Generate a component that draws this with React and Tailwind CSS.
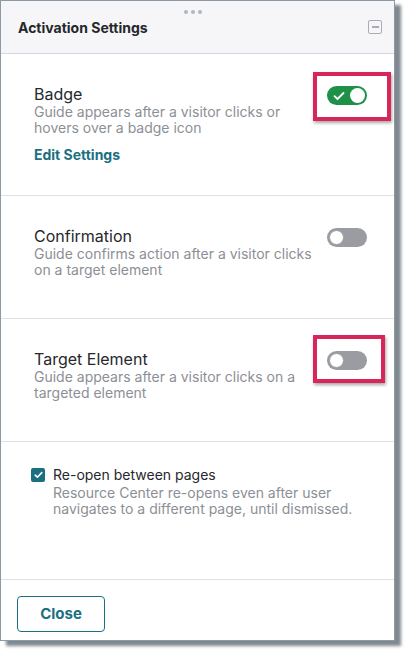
import React, { useState } from 'react';

const Toggle = ({ on }) => (
  <div
    className={`w-[40px] h-[19px] rounded-full flex items-center px-[2px] ${
      on ? 'bg-[#1e9149] justify-end' : 'bg-[#9b9ca1] justify-start'
    }`}
  >
    {on && (
      <svg width="12" height="10" viewBox="0 0 12 10" className="mr-[5px]">
        <path d="M1.5 5.2 L4.5 8 L10.5 2" fill="none" stroke="white" strokeWidth="1.8" strokeLinecap="round" strokeLinejoin="round" />
      </svg>
    )}
    <div className={`w-[15px] h-[15px] rounded-full bg-white ${on ? '' : 'border border-[#9b9ca1]'}`} />
  </div>
);

const Highlight = ({ children, box }) => (
  <div className="relative">
    {children}
    <div className={`absolute border-4 border-[#d8265a] shadow-[1px_2px_3px_rgba(0,0,0,0.35)] ${box}`} />
  </div>
);

const Section = ({ title, desc, toggle, extra, pb }) => (
  <div className={`flex justify-between pl-[33px] pr-[27px] pt-[30px] border-b border-[#dfe0e4] ${pb}`}>
    <div>
      <div className="text-[16px] leading-[20px] text-[#26282c]">{title}</div>
      <div className="text-[14px] leading-[16px] text-[#8c8f96] w-[285px]">{desc}</div>
      {extra}
    </div>
    <div className="pt-[2px]">{toggle}</div>
  </div>
);

const App = () => {
  const [reopen] = useState(true);

  return (
    <div className="w-[405px] h-[652px] bg-white" style={{ fontFamily: 'Inter, "Noto Sans", sans-serif' }}>
      <div className="w-[395px] h-[641px] flex flex-col bg-white border border-[#8e9aa3] shadow-[6px_5px_3px_#7f8990]">
        {/* Header */}
        <div className="relative h-[53px] shrink-0 bg-[#f6f6f9] border-b border-[#d5d7dd] flex items-center justify-between pl-[17px] pr-[12px]">
          <div className="absolute top-[9px] left-[183px] flex gap-[3px]">
            <span className="w-[4px] h-[4px] rounded-full bg-[#b3b6bc]" />
            <span className="w-[4px] h-[4px] rounded-full bg-[#b3b6bc]" />
            <span className="w-[4px] h-[4px] rounded-full bg-[#b3b6bc]" />
          </div>
          <div className="text-[14px] font-bold text-[#25272b] pt-[1px]">Activation Settings</div>
          <div className="w-[14px] h-[14px] rounded-[2px] border-[1.5px] border-[#a9acb2] flex items-center justify-center">
            <div className="w-[7px] h-[1.5px] bg-[#a9acb2]" />
          </div>
        </div>

        {/* Badge */}
        <Section
          title="Badge"
          desc="Guide appears after a visitor clicks or hovers over a badge icon"
          pb="pb-[30px]"
          toggle={
            <Highlight box="left-[-14px] top-[-14px] w-[78px] h-[49px]">
              <Toggle on />
            </Highlight>
          }
          extra={<div className="mt-[9px] text-[14px] leading-[20px] font-bold text-[#1b6f80]">Edit Settings</div>}
        />

        {/* Confirmation */}
        <Section
          title="Confirmation"
          desc="Guide confirms action after a visitor clicks on a target element"
          pb="pb-[40px]"
          toggle={<Toggle on={false} />}
        />

        {/* Target Element */}
        <Section
          title="Target Element"
          desc="Guide appears after a visitor clicks on a targeted element"
          pb="pb-[40px]"
          toggle={
            <Highlight box="left-[-14px] top-[-16px] w-[72px] h-[48px]">
              <Toggle on={false} />
            </Highlight>
          }
        />

        {/* Re-open */}
        <div className="flex-1 border-b border-[#dfe0e4] pl-[30px] pr-[20px] pt-[23px]">
          <div className="flex items-start gap-[8px]">
            <div className="mt-[3px] w-[14px] h-[14px] rounded-[2px] bg-[#1b6f80] flex items-center justify-center shrink-0">
              {reopen && (
                <svg width="9" height="8" viewBox="0 0 9 8">
                  <path d="M1.2 4.2 L3.4 6.2 L7.8 1.6" fill="none" stroke="white" strokeWidth="1.6" strokeLinecap="round" strokeLinejoin="round" />
                </svg>
              )}
            </div>
            <div>
              <div className="text-[14px] leading-[20px] text-[#26282c]">Re-open between pages</div>
              <div className="text-[14px] leading-[16px] text-[#8c8f96]">
                Resource Center re-opens even after user navigates to a different page, until dismissed.
              </div>
            </div>
          </div>
        </div>

        {/* Footer */}
        <div className="h-[60px] shrink-0 flex items-start pt-[16px] pl-[16px]">
          <button className="w-[88px] h-[36px] rounded-[4px] border border-[#1b6f80] text-[15px] font-bold text-[#1b6f80] bg-white">
            Close
          </button>
        </div>
      </div>
    </div>
  );
};

export default App;
